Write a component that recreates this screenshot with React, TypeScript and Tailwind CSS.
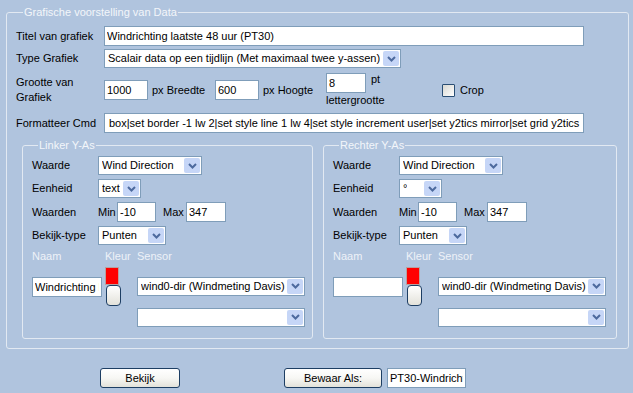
import React from "react";

function TextBox({ className, value }: { className: string; value: string }) {
  return (
    <input
      readOnly
      defaultValue={value}
      className={`border border-[#7f9db9] bg-white px-[2px] text-[11px] text-black outline-none ${className}`}
    />
  );
}

function Arrow() {
  return (
    <span className="ml-auto mr-[1px] flex h-[15px] w-[16px] shrink-0 items-center justify-center rounded-[2px] bg-[#c6d6f7]">
      <svg width="9" height="6" viewBox="0 0 9 6" fill="none">
        <path d="M1 1l3.5 3.5L8 1" stroke="#4d6a9e" strokeWidth="2" />
      </svg>
    </span>
  );
}

function Select({ className, value }: { className: string; value: string }) {
  return (
    <div
      className={`flex h-[19px] items-center border border-[#7f9db9] bg-white pl-[3px] text-[11px] whitespace-nowrap ${className}`}
    >
      <span className="overflow-hidden">{value}</span>
      <Arrow />
    </div>
  );
}

function XpButton({ className, label }: { className: string; label: string }) {
  return (
    <button
      type="button"
      className={`h-[20px] rounded-[3px] border border-[#1d3e63] bg-gradient-to-b from-white via-[#f7f7f4] to-[#e3e2da] text-[11px] text-black ${className}`}
    >
      {label}
    </button>
  );
}

function Axis({
  legend,
  naam,
  unit,
  className,
}: {
  legend: string;
  naam: string;
  unit: string;
  className: string;
}) {
  return (
    <fieldset className={`h-[200px] rounded-[3px] border border-[#e2e9f2] pl-[9px] ${className}`}>
      <legend className="ml-[6px] px-[1px] leading-[13px] text-[#f3f6fa]">{legend}</legend>
      <div className="mt-[4px] flex flex-col gap-[4px]">
        <div className="flex h-[19px] items-center">
          <span className="w-[66px]">Waarde</span>
          <Select className="w-[104px]" value="Wind Direction" />
        </div>
        <div className="flex h-[19px] items-center">
          <span className="w-[66px]">Eenheid</span>
          <Select className="w-[43px]" value={unit} />
        </div>
        <div className="flex h-[20px] items-center">
          <span className="w-[66px]">Waarden</span>
          <span className="w-[19px]">Min</span>
          <TextBox className="h-[20px] w-[39px]" value="-10" />
          <span className="ml-[7px] w-[23px]">Max</span>
          <TextBox className="h-[20px] w-[40px]" value="347" />
        </div>
        <div className="flex h-[19px] items-center">
          <span className="w-[66px]">Bekijk-type</span>
          <Select className="w-[68px]" value="Punten" />
        </div>
      </div>
      <div className="mt-[3px] flex text-[#eef2f8]">
        <span className="w-[73px]">Naam</span>
        <span className="w-[32px]">Kleur</span>
        <span>Sensor</span>
      </div>
      <div className="mt-[2px] flex">
        <TextBox className="mt-[10px] h-[20px] w-[70px]" value={naam} />
        <div className="ml-[3px] flex w-[32px] flex-col">
          <div className="h-[18px] w-[14px] border border-[#b9a0a0] bg-[#ff0000]" />
          <div className="ml-[1px] h-[21px] w-[15px] rounded-[4px] border border-[#1d3e63] bg-gradient-to-b from-white to-[#e3e2da]" />
        </div>
        <div className="flex flex-col gap-[12px] pt-[10px]">
          <Select className="w-[168px]" value="wind0-dir (Windmeting Davis)" />
          <Select className="w-[168px]" value="" />
        </div>
      </div>
    </fieldset>
  );
}

export default function App() {
  return (
    <div className="h-[393px] w-[633px] bg-[#b0c4de] px-[6px] pt-[6px] font-['Liberation_Sans',Arial,sans-serif] text-[11px] text-black">
      <fieldset className="h-[343px] w-[623px] rounded-[3px] border border-[#e2e9f2] pl-[9px]">
        <legend className="ml-[7px] px-[1px] leading-[13px] text-[#f3f6fa]">
          Grafische voorstelling van Data
        </legend>

        <div className="mt-[7px] flex flex-col">
          <div className="flex h-[20px] items-center">
            <span className="w-[88px]">Titel van grafiek</span>
            <TextBox className="h-[20px] w-[480px]" value="Windrichting laatste 48 uur (PT30)" />
          </div>
          <div className="mt-[3px] flex h-[19px] items-center">
            <span className="w-[88px]">Type Grafiek</span>
            <Select className="w-[297px]" value="Scalair data op een tijdlijn (Met maximaal twee y-assen)" />
          </div>
          <div className="mt-[4px] flex h-[36px] items-center">
            <span className="w-[88px] leading-[15px]">
              Grootte van
              <br />
              Grafiek
            </span>
            <TextBox className="h-[20px] w-[44px]" value="1000" />
            <span className="ml-[4px] w-[63px]">px Breedte</span>
            <TextBox className="h-[20px] w-[44px]" value="600" />
            <span className="ml-[4px] w-[63px]">px Hoogte</span>
            <div className="flex w-[62px] flex-col">
              <div className="flex items-start">
                <TextBox className="h-[20px] w-[40px]" value="8" />
                <span className="ml-[5px] leading-[12px]">pt</span>
              </div>
              <span className="leading-[14px]">lettergrootte</span>
            </div>
            <span className="ml-[54px] h-[13px] w-[13px] rounded-[1px] border border-[#2a4e74] bg-gradient-to-br from-[#d8d8d2] to-white" />
            <span className="ml-[5px]">Crop</span>
          </div>
          <div className="mt-[5px] flex h-[20px] items-center">
            <span className="w-[88px]">Formatteer Cmd</span>
            <TextBox
              className="h-[20px] w-[480px] pl-[4px]"
              value="box|set border -1 lw 2|set style line 1 lw 4|set style increment user|set y2tics mirror|set grid y2tics"
            />
          </div>
        </div>

        <div className="mt-[6px] ml-[6px] flex gap-[10px]">
          <Axis legend="Linker Y-As" naam="Windrichting Data" unit="text" className="w-[291px]" />
          <Axis legend="Rechter Y-As" naam="" unit="°" className="w-[294px]" />
        </div>
      </fieldset>

      <div className="mt-[19px] flex items-center">
        <XpButton className="ml-[94px] w-[80px]" label="Bekijk" />
        <XpButton className="ml-[104px] w-[98px]" label="Bewaar Als:" />
        <TextBox className="ml-[5px] h-[20px] w-[79px]" value="PT30-Windrichting" />
      </div>
    </div>
  );
}
